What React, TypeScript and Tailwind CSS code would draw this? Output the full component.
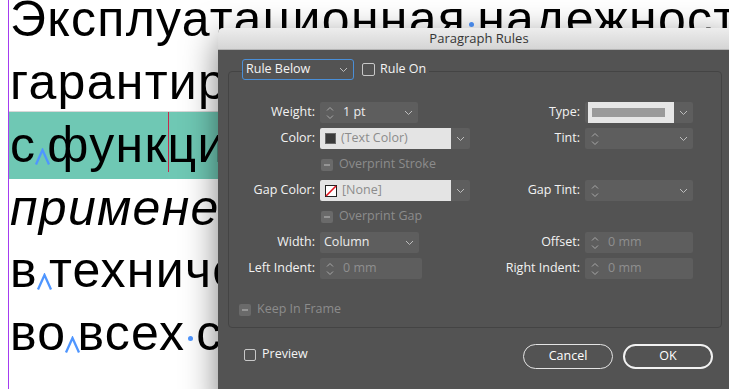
const ui = { fontFamily: '"Open Sans", "Noto Sans", sans-serif' }

function Caret() {
  return (
    <span className="relative inline-block h-px w-[11px]">
      <svg className="absolute bottom-[-4px] left-[-2px]" width="17" height="18" viewBox="0 0 17 18">
        <path d="M2 16.5 L8.5 2 L15 16.5" fill="none" stroke="#4f96ff" strokeWidth="2.3" />
      </svg>
    </span>
  )
}

function Dot() {
  return (
    <span className="relative inline-block h-px w-[11px]">
      <span className="absolute bottom-[9px] left-[3px] h-[5px] w-[5px] rounded-full bg-[#4f96ff]" />
    </span>
  )
}

function Cursor() {
  return (
    <span className="relative inline-block h-px w-0">
      <span className="absolute bottom-[-10px] left-0 h-[60px] w-px bg-[#c42a4c]" />
    </span>
  )
}

function Chevron() {
  return (
    <svg width="9" height="6" viewBox="0 0 9 6">
      <path d="M1 1 L4.5 4.5 L8 1" fill="none" stroke="#bdbdbd" strokeWidth="1" />
    </svg>
  )
}

function Spinner() {
  return (
    <svg width="8" height="16" viewBox="0 0 8 16" className="ml-[6px] shrink-0">
      <path d="M1 5.5 L4 2.5 L7 5.5" fill="none" stroke="#a8a8a8" strokeWidth="1" />
      <path d="M1 10.5 L4 13.5 L7 10.5" fill="none" stroke="#a8a8a8" strokeWidth="1" />
    </svg>
  )
}

function SpinField({ w, value, dim, chevron }: { w: string; value?: string; dim?: boolean; chevron?: boolean }) {
  return (
    <div className={`flex h-[21px] items-center rounded-[2px] bg-[#5e5e5e] ${w}`}>
      <Spinner />
      {value && (
        <span className={`ml-[9px] text-[12.5px] ${dim ? 'text-[#8f8f8f]' : 'text-[#ececec]'}`}>{value}</span>
      )}
      {chevron && (
        <span className="ml-auto mr-[5px] flex">
          <Chevron />
        </span>
      )}
    </div>
  )
}

function ColorField({ none, text }: { none?: boolean; text: string }) {
  return (
    <div className="flex h-[21px] w-[150px] items-stretch">
      <div className="flex w-[131px] items-center rounded-l-[2px] bg-[#e4e4e4]">
        {none ? (
          <svg width="12" height="12" viewBox="0 0 12 12" className="ml-[5px]">
            <rect x="0.5" y="0.5" width="11" height="11" fill="#fff" stroke="#222" />
            <path d="M1 11 L11 1" stroke="#e0141e" strokeWidth="1.6" />
          </svg>
        ) : (
          <span className="ml-[5px] h-[11px] w-[11px] border border-[#6a6a6a] bg-[#3b3b3b]" />
        )}
        <span className="ml-[5px] text-[12.5px] text-[#8c8c8c]">{text}</span>
      </div>
      <div className="flex flex-1 items-center justify-center rounded-r-[2px] bg-[#5e5e5e]">
        <Chevron />
      </div>
    </div>
  )
}

function Label({ children, w }: { children: string; w: string }) {
  return <span className={`${w} mr-[5px] text-right text-[12.5px] text-[#f2f2f2]`}>{children}</span>
}

function Disabled({ children, cls }: { children: string; cls: string }) {
  return (
    <div className={`flex h-[21px] items-center ${cls}`}>
      <span className="flex h-[12px] w-[12px] items-center justify-center rounded-[2px] bg-[#6a6a6a]">
        <span className="h-[2px] w-[6px] bg-[#959595]" />
      </span>
      <span className="ml-[6px] text-[12.5px] text-[#8c8c8c]">{children}</span>
    </div>
  )
}

function Cell({ children }: { children?: React.ReactNode }) {
  return <div className="flex h-[21px] items-center">{children}</div>
}

export default function App() {
  return (
    <div className="relative h-[389px] w-[729px] overflow-hidden bg-white">
      <div className="flex h-full pl-[8px]">
        <div
          className="h-full flex-1 whitespace-nowrap border-l border-[#a43cf0] text-[50px] leading-[62.6px] tracking-[1.3px] text-black"
          style={{ fontFamily: '"Liberation Sans", Arial, sans-serif' }}
        >
          <div className="-mt-[12px] pl-px">
            Эксплуатационная<Dot />надежность
          </div>
          <div className="pl-px">гарантирована</div>
          <div className="-my-[2px] border-t border-[#d8d8d8] bg-[#6fc8b4] py-[2px] pl-px">
            с<Caret />функ<Cursor />циями
          </div>
          <div className="pl-px italic">применения</div>
          <div className="pl-px">
            в<Caret />техническом
          </div>
          <div className="pl-px">
            во<Caret />всех<Dot />случаях
          </div>
        </div>
      </div>

      <div
        className="absolute left-[218px] top-[28px] flex h-[380px] w-[522px] flex-col rounded-t-[5px] bg-[#535353] shadow-[0_10px_34px_rgba(0,0,0,0.5)]"
        style={ui}
      >
        <div className="flex h-[22px] items-center justify-center rounded-t-[5px] border-b border-[#b4b4b4] bg-gradient-to-b from-[#ededed] to-[#d5d5d5] text-[13px] text-[#353535]">
          Paragraph Rules
        </div>

        <div className="pt-[9px]">
          <fieldset className="ml-[10px] w-[494px] rounded-[4px] border border-[#444444] pb-[7px] pt-[19px]">
            <legend className="ml-[13px] flex h-[24px] items-start pr-[3px]">
              <div className="flex h-[21px] w-[112px] items-center rounded-[3px] border border-[#4a8fd8] pl-[3px] pr-[5px]">
                <span className="text-[12.5px] text-[#f4f4f4]">Rule Below</span>
                <span className="ml-auto flex">
                  <Chevron />
                </span>
              </div>
              <div className="ml-[8px] flex h-[21px] items-center">
                <span className="h-[13px] w-[13px] rounded-[2px] border border-[#c8c8c8]" />
                <span className="ml-[5px] text-[12.5px] text-[#f4f4f4]">Rule On</span>
              </div>
            </legend>

            <div className="grid grid-cols-[251px_1fr] gap-y-[5px]">
              <Cell>
                <Label w="w-[86px]">Weight:</Label>
                <SpinField w="w-[98px]" value="1 pt" chevron />
              </Cell>
              <Cell>
                <Label w="w-[100px]">Type:</Label>
                <div className="flex h-[21px] w-[108px] items-stretch rounded-[2px] bg-[#5e5e5e]">
                  <div className="ml-[3px] flex w-[86px] items-center bg-[#e6e6e6]">
                    <span className="ml-[4px] h-[9px] w-[73px] bg-[#9a9a9a]" />
                  </div>
                  <div className="flex flex-1 items-center justify-center">
                    <Chevron />
                  </div>
                </div>
              </Cell>

              <Cell>
                <Label w="w-[86px]">Color:</Label>
                <ColorField text="(Text Color)" />
              </Cell>
              <Cell>
                <Label w="w-[100px]">Tint:</Label>
                <SpinField w="w-[108px]" chevron />
              </Cell>

              <Disabled cls="ml-[92px]">Overprint Stroke</Disabled>
              <Cell />

              <Cell>
                <Label w="w-[86px]">Gap Color:</Label>
                <ColorField none text="[None]" />
              </Cell>
              <Cell>
                <Label w="w-[100px]">Gap Tint:</Label>
                <SpinField w="w-[108px]" chevron />
              </Cell>

              <Disabled cls="ml-[92px]">Overprint Gap</Disabled>
              <Cell />

              <Cell>
                <Label w="w-[86px]">Width:</Label>
                <div className="flex h-[21px] w-[99px] items-center rounded-[2px] bg-[#5e5e5e] pl-[4px] pr-[5px]">
                  <span className="text-[12.5px] text-[#ececec]">Column</span>
                  <span className="ml-auto flex">
                    <Chevron />
                  </span>
                </div>
              </Cell>
              <Cell>
                <Label w="w-[100px]">Offset:</Label>
                <SpinField w="w-[108px]" value="0 mm" dim />
              </Cell>

              <Cell>
                <Label w="w-[86px]">Left Indent:</Label>
                <SpinField w="w-[102px]" value="0 mm" dim />
              </Cell>
              <Cell>
                <Label w="w-[100px]">Right Indent:</Label>
                <SpinField w="w-[108px]" value="0 mm" dim />
              </Cell>
            </div>

            <Disabled cls="ml-[10px] mt-[20px]">Keep In Frame</Disabled>
          </fieldset>

          <div className="mt-[16px] flex items-center pl-[26px] pr-[27px]">
            <span className="-mt-[4px] h-[12px] w-[12px] rounded-[2px] border border-[#c8c8c8]" />
            <span className="-mt-[4px] ml-[6px] text-[12.5px] text-[#f4f4f4]">Preview</span>
            <button className="ml-auto h-[25px] w-[90px] rounded-full border border-[#e4e4e4] text-[12.5px] text-white">
              Cancel
            </button>
            <button className="ml-[10px] h-[25px] w-[90px] rounded-full border-2 border-[#f2f2f2] text-[12.5px] text-white">
              OK
            </button>
          </div>
        </div>
      </div>
    </div>
  )
}
